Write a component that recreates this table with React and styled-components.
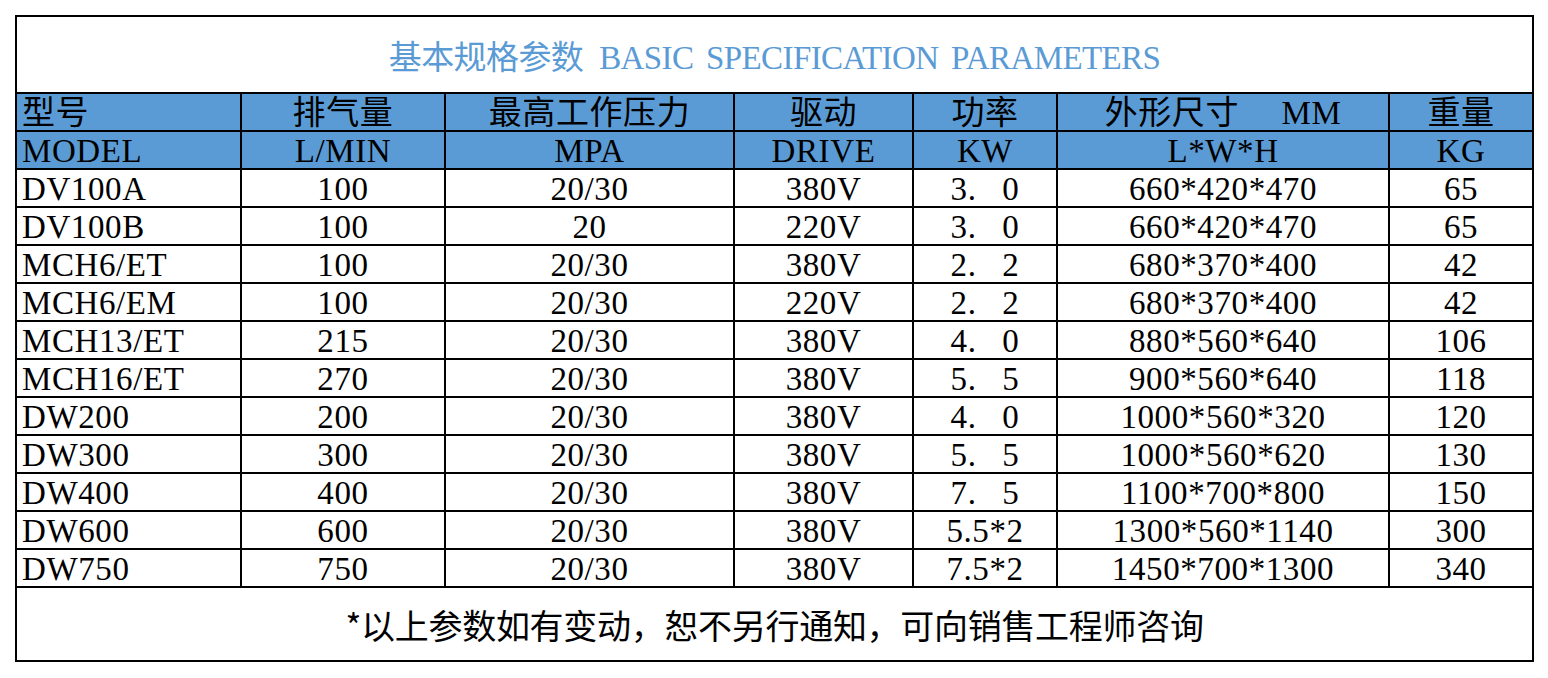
import React from "react";
import styled, { createGlobalStyle } from "styled-components";

const GlobalStyle = createGlobalStyle`
  body {
    margin: 0;
    background: #fff;
    font-family: "Liberation Serif", "Noto Sans CJK SC", serif;
    color: #000;
  }
`;

const Page = styled.div`
  padding: 15px 0 0 15px;
`;

const Sheet = styled.table`
  border-collapse: collapse;
  table-layout: fixed;
  width: 1518px;
  border: 2px solid #000;
`;

const TitleCell = styled.td`
  height: 75px;
  padding: 0;
  text-align: center;
  vertical-align: middle;
  color: #5b9bd5;
  font-size: 33px;
  letter-spacing: -0.6px;
  border: 2px solid #000;
`;

const TitleLatin = styled.span`
  margin-left: 16px;
  word-spacing: 5px;
`;

const Row = styled.tr`
  background: ${(p) => (p.$head ? "#5b9bd5" : "#fff")};
`;

const Cell = styled.td`
  height: 34px;
  padding: 2px 0 0 ${(p) => (p.$left ? "5px" : "0")};
  text-align: ${(p) => (p.$left ? "left" : "center")};
  vertical-align: middle;
  font-size: 33px;
  line-height: 34px;
  letter-spacing: 0.6px;
  word-spacing: ${(p) => (p.$head ? "0" : "17px")};
  white-space: pre;
  overflow: hidden;
  border: 2px solid #000;
`;

const NoteCell = styled.td`
  height: 72px;
  padding: 0;
  text-align: center;
  vertical-align: middle;
  font-family: "Noto Sans CJK SC", sans-serif;
  font-size: 34px;
  letter-spacing: -0.3px;
  border: 2px solid #000;
`;

const widths = [225, 204, 289, 179, 144, 332, 144];

const headCn = ["型号", "排气量", "最高工作压力", "驱动", "功率", "外形尺寸\u3000 MM", "重量"];
const headEn = ["MODEL", "L/MIN", "MPA", "DRIVE", "KW", "L*W*H", "KG"];

const rows = [
  ["DV100A", "100", "20/30", "380V", "3. 0", "660*420*470", "65"],
  ["DV100B", "100", "20", "220V", "3. 0", "660*420*470", "65"],
  ["MCH6/ET", "100", "20/30", "380V", "2. 2", "680*370*400", "42"],
  ["MCH6/EM", "100", "20/30", "220V", "2. 2", "680*370*400", "42"],
  ["MCH13/ET", "215", "20/30", "380V", "4. 0", "880*560*640", "106"],
  ["MCH16/ET", "270", "20/30", "380V", "5. 5", "900*560*640", "118"],
  ["DW200", "200", "20/30", "380V", "4. 0", "1000*560*320", "120"],
  ["DW300", "300", "20/30", "380V", "5. 5", "1000*560*620", "130"],
  ["DW400", "400", "20/30", "380V", "7. 5", "1100*700*800", "150"],
  ["DW600", "600", "20/30", "380V", "5.5*2", "1300*560*1140", "300"],
  ["DW750", "750", "20/30", "380V", "7.5*2", "1450*700*1300", "340"],
];

function Line({ cells, head }) {
  return (
    <Row $head={head}>
      {cells.map((c, i) => (
        <Cell key={i} $left={i === 0} $head={head}>
          {c}
        </Cell>
      ))}
    </Row>
  );
}

export default function App() {
  return (
    <Page>
      <GlobalStyle />
      <Sheet>
        <colgroup>
          {widths.map((w, i) => (
            <col key={i} style={{ width: w }} />
          ))}
        </colgroup>
        <tbody>
          <tr>
            <TitleCell colSpan={7}>
              基本规格参数<TitleLatin>BASIC SPECIFICATION PARAMETERS</TitleLatin>
            </TitleCell>
          </tr>
          <Line cells={headCn} head />
          <Line cells={headEn} head />
          {rows.map((r) => (
            <Line key={r[0]} cells={r} />
          ))}
          <tr>
            <NoteCell colSpan={7}>*以上参数如有变动，恕不另行通知，可向销售工程师咨询</NoteCell>
          </tr>
        </tbody>
      </Sheet>
    </Page>
  );
}
